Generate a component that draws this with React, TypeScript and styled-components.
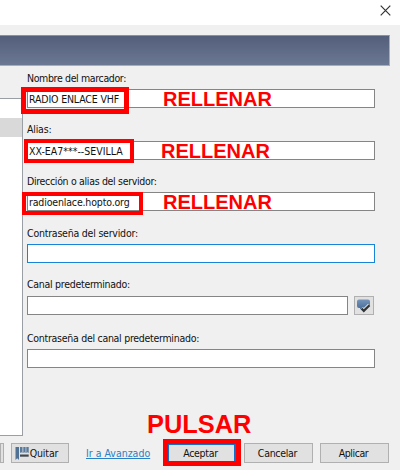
import React from "react";
import styled, { createGlobalStyle } from "styled-components";

const GlobalStyle = createGlobalStyle`
  * { box-sizing: border-box; }
  body { margin: 0; background: #f0f0f0; }
`;

const Dialog = styled.div`
  position: relative;
  display: flex;
  flex-direction: column;
  width: 400px;
  height: 470px;
  overflow: hidden;
  background: #f0f0f0;
  color: #111;
  font: 10.5px/14px "DejaVu Sans Condensed", "DejaVu Sans", sans-serif;
  font-stretch: condensed;
  white-space: nowrap;
`;

const TitleBar = styled.header`
  display: flex;
  justify-content: flex-end;
  height: 25px;
  padding: 5px 9px 0 0;
  background: #fff;
`;

const Banner = styled.div`
  height: 31px;
  margin: 10px 10px 0 0;
  background: linear-gradient(#535e7b, #6b7893);
  border: solid #a7adbb;
  border-width: 1px 1px 1px 0;
  border-top-color: #8990a2;
`;

const Body = styled.main`
  display: flex;
  height: 370px;
`;

const BookmarkList = styled.div`
  width: 23px;
  height: 338px;
  margin-top: 32px;
  background: #fff;
  border: solid #9a9ea5;
  border-width: 1px 1px 1px 0;
`;

const BookmarkRow = styled.div<{ $selected?: boolean }>`
  height: 19px;
  background: ${(p) => (p.$selected ? "#d9d9d9" : "#fff")};
`;

const Form = styled.form`
  flex: 1;
  padding: 5px 25px 0 4px;
`;

const Field = styled.div<{ $gap: number; $after: number }>`
  display: flex;
  flex-direction: column;
  gap: ${(p) => p.$gap}px;
  margin-bottom: ${(p) => p.$after}px;
`;

const Label = styled.label<{ $spacing: number }>`
  height: 14px;
  line-height: 15px;
  letter-spacing: ${(p) => p.$spacing}px;
`;

const InputRow = styled.div`
  display: flex;
  gap: 6px;
`;

const Input = styled.div<{ $focused?: boolean; $spacing?: number }>`
  flex: 1;
  height: 19px;
  padding: 2px 1px 0;
  background: #fff;
  border: 1px solid ${(p) => (p.$focused ? "#1883d7" : "#858585")};
  letter-spacing: ${(p) => p.$spacing ?? 0}px;
`;

const IconButton = styled.button`
  width: 20px;
  height: 19px;
  margin-right: 1px;
  padding: 0;
  background: #e1e1e1;
  border: 1px solid #b0b0b0;
  line-height: 0;
`;

const Footer = styled.footer`
  display: flex;
  align-items: center;
  height: 20px;
  margin-top: 7px;
`;

const Button = styled.button<{ $width: number; $left: number; $primary?: boolean; $spacing?: number }>`
  display: flex;
  flex: none;
  align-items: center;
  justify-content: center;
  gap: 1px;
  width: ${(p) => p.$width}px;
  height: 20px;
  margin: 0 0 0 ${(p) => p.$left}px;
  padding: 0 2px 0 0;
  background: #e1e1e1;
  border: ${(p) => (p.$primary ? "2px solid #1272c9" : "1px solid #b0b0b0")};
  color: #111;
  font: inherit;
  letter-spacing: ${(p) => p.$spacing ?? 0}px;
`;

const IconLabel = styled.span`
  margin-right: 5px;
`;

const AdvancedLink = styled.a`
  width: 64px;
  margin-left: 17px;
  color: #2a80c4;
  text-decoration: underline;
`;

const Highlight = styled.div<{ $x: number; $y: number; $w: number; $h: number; $t?: number }>`
  position: absolute;
  left: ${(p) => p.$x}px;
  top: ${(p) => p.$y}px;
  width: ${(p) => p.$w}px;
  height: ${(p) => p.$h}px;
  border: ${(p) => p.$t ?? 4}px solid #fe0000;
`;

const Callout = styled.div<{ $x: number; $y: number; $size: number }>`
  position: absolute;
  left: ${(p) => p.$x}px;
  top: ${(p) => p.$y}px;
  color: #fe0000;
  font: bold ${(p) => p.$size}px/24px "Liberation Sans", Arial, sans-serif;
`;

const fields = [
  { label: "Nombre del marcador:", value: "RADIO ENLACE VHF", gap: 4, after: 14, ls: -0.36, vs: -0.16 },
  { label: "Alias:", value: "XX-EA7***--SEVILLA", gap: 5, after: 14, ls: -0.2, vs: 0 },
  { label: "Dirección o alias del servidor:", value: "radioenlace.hopto.org", gap: 4, after: 15, ls: -0.32, vs: -0.16 },
  { label: "Contraseña del servidor:", value: "", gap: 4, after: 14, ls: -0.22, vs: 0, focused: true },
  { label: "Canal predeterminado:", value: "", gap: 5, after: 16, ls: -0.28, vs: 0, picker: true },
  { label: "Contraseña del canal predeterminado:", value: "", gap: 4, after: 0, ls: -0.28, vs: 0 },
];

const CloseIcon = () => (
  <svg width="11" height="11" viewBox="0 0 11 11">
    <path d="M.7.7l9.6 9.6M10.3.7L.7 10.3" stroke="#333" strokeWidth="1.2" />
  </svg>
);

const ChannelIcon = () => (
  <svg width="18" height="17" viewBox="0 0 18 17">
    <defs>
      <linearGradient id="bubble" x2="0" y2="1">
        <stop stopColor="#7696ba" />
        <stop offset="1" stopColor="#466b96" />
      </linearGradient>
    </defs>
    <path d="M4 2.500h9q2 0 2 2V9q0 2-2 2H7l-2 1.500V11H4q-2 0-2-2V4.500q0-2 2-2z" fill="url(#bubble)" />
    <path d="M6.500 11.500l2.300 2.300 5.700-5.600" fill="none" stroke="#e1e1e1" strokeWidth="4" />
    <path d="M6.500 11.500l2.300 2.300 5.700-5.600" fill="none" stroke="#303438" strokeWidth="2.300" />
  </svg>
);

const BookmarkIcon = () => (
  <svg width="14" height="13" viewBox="0 0 14 13">
    <path d="M.5 0h3.500v13L2.200 11.300.5 13z" fill="#4f7294" />
    <path d="M5 0h2.500v6L6.200 5.200 5 6zM8.300 0h2.300v6l-1.200-.8-1.100.8zM11.300 0h2.400v6l-1.200-.8-1.200.8z" fill="#587a9b" />
    <path d="M5 7.500h8.700v2.200H5z" fill="#414952" />
  </svg>
);

export default function App() {
  return (
    <>
      <GlobalStyle />
      <Dialog>
        <TitleBar><CloseIcon /></TitleBar>
        <Banner />
        <Body>
          <BookmarkList>
            <BookmarkRow />
            <BookmarkRow $selected />
          </BookmarkList>
          <Form>
            {fields.map((f) => (
              <Field key={f.label} $gap={f.gap} $after={f.after}>
                <Label $spacing={f.ls}><span>{f.label}</span></Label>
                <InputRow>
                  <Input $focused={f.focused} $spacing={f.vs}><span>{f.value}</span></Input>
                  {f.picker && <IconButton type="button"><ChannelIcon /></IconButton>}
                </InputRow>
              </Field>
            ))}
          </Form>
        </Body>
        <Footer>
          <Button $width={4} $left={0} />
          <Button $width={58} $left={7} $spacing={-0.15}><BookmarkIcon /><IconLabel>Quitar</IconLabel></Button>
          <AdvancedLink>Ir a Avanzado</AdvancedLink>
          <Button $width={69} $left={17} $spacing={-0.3} $primary><span>Aceptar</span></Button>
          <Button $width={69} $left={8} $spacing={-0.3}><span>Cancelar</span></Button>
          <Button $width={69} $left={7} $spacing={-0.42}><span>Aplicar</span></Button>
        </Footer>
        <Highlight $x={21} $y={87} $w={108} $h={27} $t={5} />
        <Highlight $x={24} $y={139} $w={110} $h={24} />
        <Highlight $x={22} $y={192} $w={121} $h={23} />
        <Highlight $x={163} $y={439} $w={78} $h={27} $t={5} />
        <Callout $x={163} $y={87} $size={20}>RELLENAR</Callout>
        <Callout $x={161} $y={139} $size={20}>RELLENAR</Callout>
        <Callout $x={163} $y={190} $size={20}>RELLENAR</Callout>
        <Callout $x={147} $y={412} $size={25.4}>PULSAR</Callout>
      </Dialog>
    </>
  );
}
